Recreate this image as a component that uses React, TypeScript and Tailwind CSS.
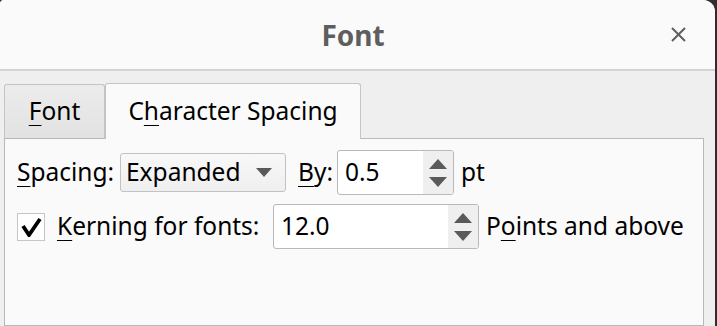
import React from "react";

const font = { fontFamily: '"Noto Sans", "DejaVu Sans", sans-serif' };

const Spin = ({ value, width }: { value: string; width: string }) => (
    <div className={`flex h-[45px] ${width} rounded-[3px] border border-[#b9b9b9] bg-white overflow-hidden`}>
        <div className="flex flex-1 items-center pl-[7px] text-black">{value}</div>
        <div className="flex w-[30px] flex-col items-center justify-center gap-[8px] bg-[#efefef]">
            <svg width="18" height="10" viewBox="0 0 18 10">
                <path d="M9 0 L18 10 L0 10 Z" fill="#5a5a5a" />
            </svg>
            <svg width="18" height="10" viewBox="0 0 18 10">
                <path d="M0 0 L18 0 L9 10 Z" fill="#5a5a5a" />
            </svg>
        </div>
    </div>
);

const App = () => {
    return (
        <div className="flex h-[326px] w-[717px] overflow-hidden bg-[#2e2e2e]" style={font}>
            <div className="flex h-full w-[715px] flex-col overflow-hidden rounded-tl-[4px] rounded-tr-[12px] bg-[#efefef]">
                {/* Title bar */}
                <div className="relative flex h-[71px] items-center justify-center border-b-2 border-[#d3d3d3] bg-[#fafafa] pr-[9px]">
                    <span className="text-[28px] font-bold text-[#5e5e5e]">Font</span>
                    <svg className="absolute right-[29px] top-[27px]" width="15" height="15" viewBox="0 0 15 15">
                        <path d="M1 1 L14 14 M14 1 L1 14" stroke="#5e5e5e" strokeWidth="2" />
                    </svg>
                </div>

                {/* Tabs */}
                <div className="flex items-end pl-[4px] pt-[12px] text-[24.5px] text-black">
                    <div className="flex h-[54px] w-[101px] items-center justify-center rounded-t-[3px] border border-b-0 border-[#c4c4c4] bg-gradient-to-b from-[#ececec] to-[#e2e2e2]">
                        <span>
                            <span className="underline underline-offset-[5px] decoration-1">F</span>ont
                        </span>
                    </div>
                    <div className="relative z-10 -mb-px flex h-[56px] w-[256px] items-center justify-center rounded-t-[3px] border border-b-0 border-[#c4c4c4] bg-[#fafafa]">
                        <span>
                            C<span className="underline underline-offset-[5px] decoration-1">h</span>aracter Spacing
                        </span>
                    </div>
                </div>

                {/* Panel */}
                <div className="ml-[4px] mr-[11px] flex flex-1 flex-col gap-[9px] border border-[#b9b9b9] bg-[#fafafa] pl-[12px] pt-[11px] text-[24.5px] text-black">
                    <div className="flex items-center">
                        <span className="w-[103px]">
                            <span className="underline underline-offset-[5px] decoration-1">S</span>pacing:
                        </span>
                        <div className="flex h-[39px] w-[166px] items-center justify-between rounded-[3px] border border-[#c2c2c2] bg-gradient-to-b from-[#f8f8f8] to-[#efefef] pl-[5px] pr-[13px]">
                            <span>Expanded</span>
                            <svg width="16" height="9" viewBox="0 0 16 9">
                                <path d="M0 0 L16 0 L8 9 Z" fill="#5a5a5a" />
                            </svg>
                        </div>
                        <span className="ml-[12px] w-[39px]">
                            <span className="underline underline-offset-[5px] decoration-1">B</span>y:
                        </span>
                        <Spin value="0.5" width="w-[117px]" />
                        <span className="ml-[7px]">pt</span>
                    </div>
                    <div className="flex items-center">
                        <div className="flex h-[28px] w-[28px] items-center justify-center border border-[#c6c6c6] bg-white">
                            <svg width="22" height="20" viewBox="0 0 22 20">
                                <path d="M3 9 L9 18 L20 2" stroke="#000" strokeWidth="3.8" fill="none" />
                            </svg>
                        </div>
                        <span className="ml-[12px] w-[216px]">
                            <span className="underline underline-offset-[5px] decoration-1">K</span>erning for fonts:
                        </span>
                        <Spin value="12.0" width="w-[206px]" />
                        <span className="ml-[7px]">
                            P<span className="underline underline-offset-[5px] decoration-1">o</span>ints and above
                        </span>
                    </div>
                </div>
            </div>
        </div>
    );
};

export default App;
